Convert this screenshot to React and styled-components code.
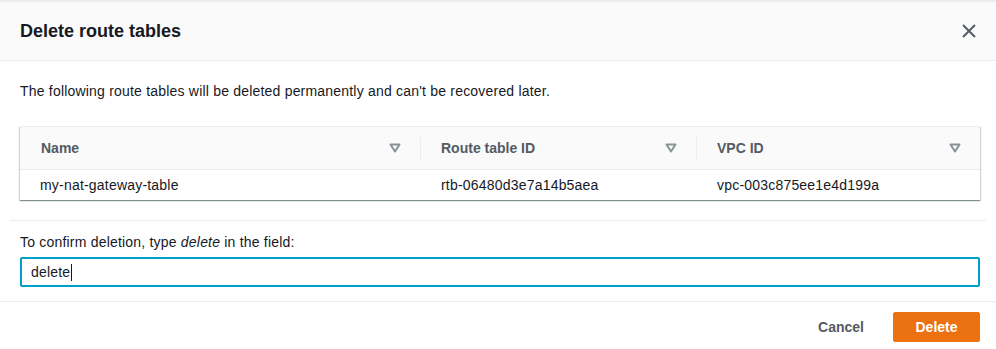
import { styled, createGlobalStyle } from 'styled-components'

const GlobalStyle = createGlobalStyle`
  html, body {
    margin: 0;
    padding: 0;
    background: #ffffff;
    font-family: "Liberation Sans", Arial, sans-serif;
    color: #16191f;
  }
`

const Page = styled.div`
  width: 996px;
  height: 349px;
  padding-top: 2px;
  box-sizing: border-box;
  background: #eaeded;
`

const Modal = styled.div`
  background: #ffffff;
  height: 347px;
`

const Header = styled.div`
  display: flex;
  align-items: center;
  justify-content: space-between;
  height: 58px;
  padding: 0 20px;
  background: #fafafa;
  border-bottom: 1px solid #eaeded;

  & h2 {
    margin: 0;
    font-size: 18px;
    font-weight: 700;
    line-height: 22px;
    color: #16191f;
  }
`

const CloseButton = styled.button`
  display: flex;
  align-items: center;
  justify-content: center;
  width: 20px;
  height: 20px;
  padding: 0;
  margin-right: -3px;
  border: none;
  background: transparent;
  cursor: pointer;
`

const Body = styled.div`
  padding: 20px 16px 0 20px;

  & p {
    margin: 0;
    font-size: 14px;
    line-height: 20px;
    letter-spacing: 0.2px;
  }
`

const Table = styled.div`
  margin-top: 25px;
  border-top: 1px solid #eaeded;
  box-shadow: 0 1px 1px 0 rgba(0, 28, 36, 0.3), 1px 1px 1px 0 rgba(0, 28, 36, 0.15),
    -1px 1px 1px 0 rgba(0, 28, 36, 0.15);
`

const Row = styled.div`
  display: grid;
  grid-template-columns: 400px 276px 1fr;
  height: ${({ $head }) => ($head ? '42px' : '30px')};
  background: ${({ $head }) => ($head ? '#fafafa' : '#ffffff')};
  border-bottom: ${({ $head }) => ($head ? '1px solid #eaeded' : 'none')};
`

const HeadCell = styled.div`
  display: flex;
  align-items: center;
  justify-content: space-between;
  padding: 0 19px 0 21px;
  font-size: 14px;
  font-weight: 700;
  color: #545b64;
  position: relative;

  &:not(:first-child)::before {
    content: '';
    position: absolute;
    left: 0;
    top: 10px;
    bottom: 9px;
    width: 1px;
    background: #eaeded;
  }
`

const Cell = styled.div`
  display: flex;
  align-items: center;
  padding: 0 20px 0 ${({ $first }) => ($first ? '20px' : '21px')};
  font-size: 14px;
  letter-spacing: 0.2px;
  color: #16191f;
`

const Divider = styled.div`
  margin: 20px -6px 0 -10px;
  height: 1px;
  background: #eaeded;
`

const Label = styled.label`
  display: block;
  margin-top: 11px;
  font-size: 14px;
  line-height: 20px;
  letter-spacing: 0.2px;

  & em {
    font-style: italic;
  }
`

const Field = styled.div`
  display: flex;
  align-items: center;
  height: 30px;
  margin-top: 5px;
  padding: 0 9px;
  box-sizing: border-box;
  border: 2px solid #00a1c9;
  border-radius: 2px;
  font-size: 14px;
  letter-spacing: 0.2px;
  color: #16191f;
`

const Caret = styled.span`
  display: inline-block;
  width: 1px;
  height: 17px;
  margin-left: 1px;
  background: #16191f;
`

const Footer = styled.div`
  display: flex;
  justify-content: flex-end;
  align-items: center;
  gap: 8px;
  margin-top: 14px;
  padding: 10px 16px 0;
  border-top: 1px solid #eaeded;
`

const Button = styled.button`
  height: 30px;
  padding: 0 ${({ $primary }) => ($primary ? '19px' : '20px')};
  min-width: ${({ $primary }) => ($primary ? '87px' : 'auto')};
  font-family: "Liberation Sans", Arial, sans-serif;
  font-size: 14px;
  font-weight: 700;
  border-radius: 2px;
  border: 1px solid ${({ $primary }) => ($primary ? '#ec7211' : 'transparent')};
  background: ${({ $primary }) => ($primary ? '#ec7211' : 'transparent')};
  color: ${({ $primary }) => ($primary ? '#ffffff' : '#545b64')};
  cursor: pointer;
`

function SortIcon() {
  return (
    <svg width="12" height="10" viewBox="0 0 12 10">
      <path d="M1.5 1.5h9L6 8.5z" fill="none" stroke="#879596" strokeWidth="2" strokeLinejoin="round" />
    </svg>
  )
}

const columns = ['Name', 'Route table ID', 'VPC ID']
const rows = [['my-nat-gateway-table', 'rtb-06480d3e7a14b5aea', 'vpc-003c875ee1e4d199a']]

export default function App() {
  return (
    <>
      <GlobalStyle />
      <Page>
        <Modal>
          <Header>
            <h2>Delete route tables</h2>
            <CloseButton aria-label="Close">
              <svg width="14" height="14" viewBox="0 0 14 14">
                <path d="M1 1l12 12M13 1L1 13" stroke="#545b64" strokeWidth="2" />
              </svg>
            </CloseButton>
          </Header>
          <Body>
            <p>The following route tables will be deleted permanently and can't be recovered later.</p>
            <Table>
              <Row $head>
                {columns.map((c) => (
                  <HeadCell key={c}>
                    {c}
                    <SortIcon />
                  </HeadCell>
                ))}
              </Row>
              {rows.map((r) => (
                <Row key={r[0]}>
                  {r.map((v, i) => (
                    <Cell key={v} $first={i === 0}>{v}</Cell>
                  ))}
                </Row>
              ))}
            </Table>
            <Divider />
            <Label>
              To confirm deletion, type <em>delete</em> in the field:
            </Label>
            <Field>
              delete
              <Caret />
            </Field>
          </Body>
          <Footer>
            <Button>Cancel</Button>
            <Button $primary>Delete</Button>
          </Footer>
        </Modal>
      </Page>
    </>
  )
}
